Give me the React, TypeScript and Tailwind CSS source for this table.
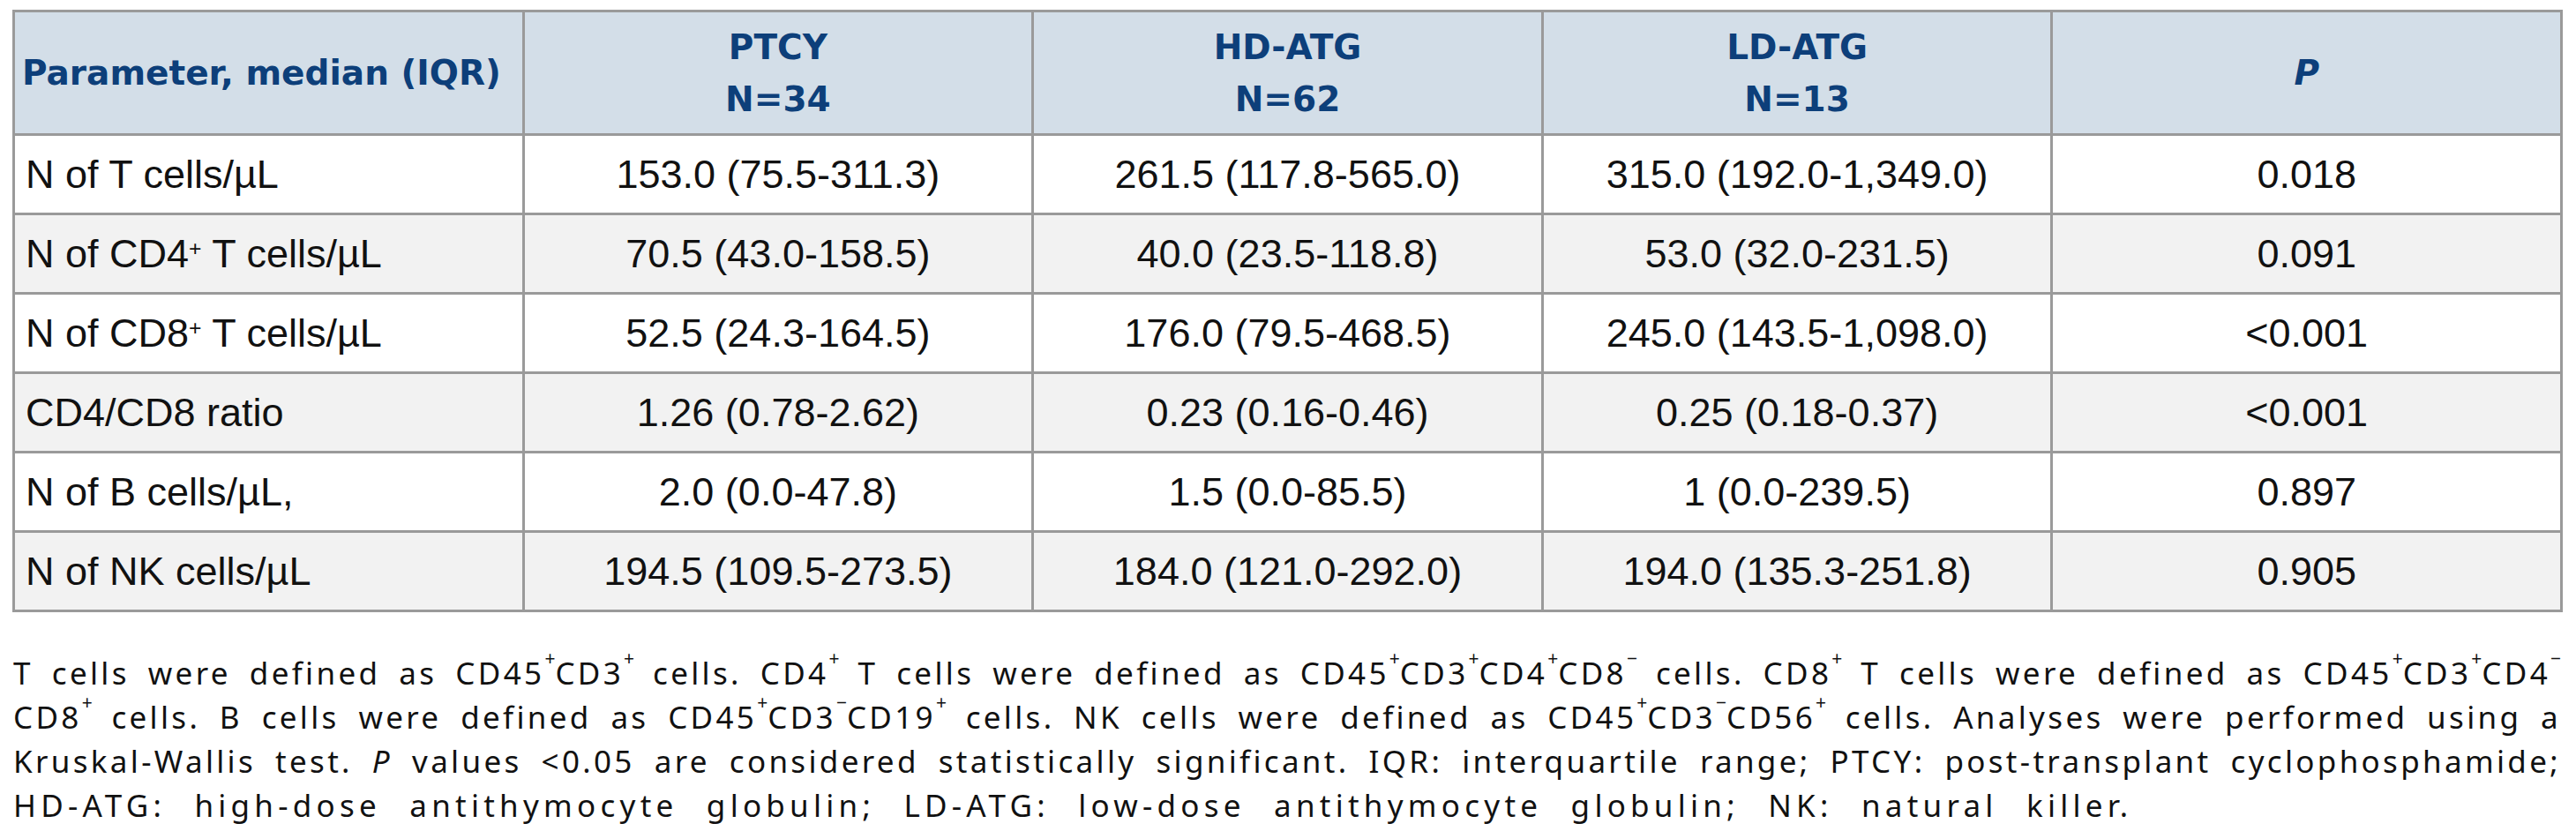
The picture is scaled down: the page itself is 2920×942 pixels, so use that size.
import type { ReactNode } from "react";

type Fila = {
  parametro: ReactNode;
  ptcy: string;
  hd: string;
  ld: string;
  p: string;
};

const filas: Fila[] = [
  { parametro: <>N of T cells/µL</>, ptcy: "153.0 (75.5-311.3)", hd: "261.5 (117.8-565.0)", ld: "315.0 (192.0-1,349.0)", p: "0.018" },
  { parametro: <>N of CD4<sup className="text-[0.55em]">+</sup> T cells/µL</>, ptcy: "70.5 (43.0-158.5)", hd: "40.0 (23.5-118.8)", ld: "53.0 (32.0-231.5)", p: "0.091" },
  { parametro: <>N of CD8<sup className="text-[0.55em]">+</sup> T cells/µL</>, ptcy: "52.5 (24.3-164.5)", hd: "176.0 (79.5-468.5)", ld: "245.0 (143.5-1,098.0)", p: "<0.001" },
  { parametro: <>CD4/CD8 ratio</>, ptcy: "1.26 (0.78-2.62)", hd: "0.23 (0.16-0.46)", ld: "0.25 (0.18-0.37)", p: "<0.001" },
  { parametro: <>N of B cells/µL,</>, ptcy: "2.0 (0.0-47.8)", hd: "1.5 (0.0-85.5)", ld: "1 (0.0-239.5)", p: "0.897" },
  { parametro: <>N of NK cells/µL</>, ptcy: "194.5 (109.5-273.5)", hd: "184.0 (121.0-292.0)", ld: "194.0 (135.3-251.8)", p: "0.905" },
];

const Sup = ({ children }: { children: ReactNode }) => (
  <sup className="text-[0.6em] align-[0.55em] leading-none tracking-normal">{children}</sup>
);

function Linea({ children, ultima }: { children: ReactNode; ultima?: boolean }) {
  return (
    <p
      className={
        ultima
          ? "text-left tracking-[0.15em] [word-spacing:18px]"
          : "text-justify [text-align-last:justify]"
      }
    >
      {children}
    </p>
  );
}

export default function App() {
  const th = "border-[3px] border-[#9a9a9a] px-3 text-center align-middle whitespace-nowrap";
  const td = "border-[3px] border-[#9a9a9a] px-3 text-center align-middle whitespace-nowrap";

  return (
    <div className="min-h-screen w-[2920px] bg-white pt-[11px] pl-[14px] pr-[15px]">
      <table className="w-[2891px] table-fixed border-collapse font-['Liberation_Sans',Arial,sans-serif]">
        <thead>
          <tr className="h-[140px] bg-[#d3dee8] text-[#0d3f7a] font-['DejaVu_Sans',sans-serif] text-[39px] font-bold leading-[59px]">
            <th className={`${th} text-left !px-2`}>Parameter, median (IQR)</th>
            <th className={th}>PTCY<br />N=34</th>
            <th className={th}>HD-ATG<br />N=62</th>
            <th className={th}>LD-ATG<br />N=13</th>
            <th className={th}><i>P</i></th>
          </tr>
        </thead>
        <tbody className="text-[45px] text-[#111]">
          {filas.map((f, i) => (
            <tr key={i} className={`h-[90px] ${i % 2 === 1 ? "bg-[#f2f2f2]" : "bg-white"}`}>
              <td className={`${td} text-left`}>{f.parametro}</td>
              <td className={td}>{f.ptcy}</td>
              <td className={td}>{f.hd}</td>
              <td className={td}>{f.ld}</td>
              <td className={td}>{f.p}</td>
            </tr>
          ))}
        </tbody>
      </table>

      <div className="mt-[44px] w-[2889px] pl-px font-['Noto_Sans',sans-serif] text-[35px] leading-[50px] tracking-[0.095em] text-[#111]">
        <Linea>
          T cells were defined as CD45<Sup>+</Sup>CD3<Sup>+</Sup> cells. CD4<Sup>+</Sup> T cells were defined as
          CD45<Sup>+</Sup>CD3<Sup>+</Sup>CD4<Sup>+</Sup>CD8<Sup>−</Sup> cells. CD8<Sup>+</Sup> T cells were defined as
          CD45<Sup>+</Sup>CD3<Sup>+</Sup>CD4<Sup>−</Sup>
        </Linea>
        <Linea>
          CD8<Sup>+</Sup> cells. B cells were defined as CD45<Sup>+</Sup>CD3<Sup>−</Sup>CD19<Sup>+</Sup> cells. NK cells were
          defined as CD45<Sup>+</Sup>CD3<Sup>−</Sup>CD56<Sup>+</Sup> cells. Analyses were performed using a
        </Linea>
        <Linea>
          Kruskal-Wallis test. <i>P</i> values &lt;0.05 are considered statistically significant. IQR: interquartile range;
          PTCY: post-transplant cyclophosphamide;
        </Linea>
        <Linea ultima>
          HD-ATG: high-dose antithymocyte globulin; LD-ATG: low-dose antithymocyte globulin; NK: natural killer.
        </Linea>
      </div>
    </div>
  );
}
